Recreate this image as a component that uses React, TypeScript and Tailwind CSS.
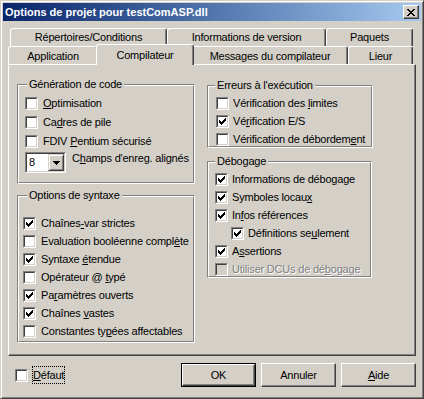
import type { ReactNode } from 'react';

function CheckMark() {
  return (
    <svg width="7" height="7" viewBox="0 0 7 7" shapeRendering="crispEdges">
      <path d="M0 2h1v3H0zM1 3h1v3H1zM2 4h1v3H2zM3 3h1v3H3zM4 2h1v3H4zM5 1h1v3H5zM6 0h1v3H6z" fill="#000" />
    </svg>
  );
}

function Box({ checked, disabled }: { checked?: boolean; disabled?: boolean }) {
  return (
    <div className="h-[13px] w-[13px] shrink-0 border border-t-[#808080] border-l-[#808080] border-r-white border-b-white">
      <div
        className={`flex h-full w-full items-center justify-center border border-t-[#404040] border-l-[#404040] border-r-[#d4d0c8] border-b-[#d4d0c8] ${
          disabled ? 'bg-[#d4d0c8]' : 'bg-white'
        }`}
      >
        {checked && <CheckMark />}
      </div>
    </div>
  );
}

function Option({
  children,
  checked,
  disabled,
  gap = 'ml-[5px]',
  className = '',
}: {
  children: ReactNode;
  checked?: boolean;
  disabled?: boolean;
  gap?: string;
  className?: string;
}) {
  return (
    <div className={`flex h-[13px] items-center ${className}`}>
      <Box checked={checked} disabled={disabled} />
      <span
        className={`${gap} whitespace-nowrap leading-[13px] ${
          disabled ? 'text-[#808080] [text-shadow:1px_1px_0_#fff]' : ''
        }`}
      >
        {children}
      </span>
    </div>
  );
}

function Group({
  title,
  titleLeft,
  className,
  children,
}: {
  title: string;
  titleLeft: string;
  className: string;
  children: ReactNode;
}) {
  return (
    <div className={`relative border border-t-[#808080] border-l-[#808080] border-r-white border-b-white ${className}`}>
      <div className="h-full w-full border border-t-white border-l-white border-r-[#808080] border-b-[#808080]">
        {children}
      </div>
      <span className={`absolute -top-[7px] ${titleLeft} whitespace-nowrap bg-[#d4d0c8] px-[2px] leading-[13px]`}>
        {title}
      </span>
    </div>
  );
}

function Tab({ label, className = '' }: { label: string; className?: string }) {
  return (
    <div
      className={`flex shrink-0 items-center justify-center rounded-t-[3px] border-t border-l border-r border-t-white border-l-white border-r-[#404040] bg-[#d4d0c8] shadow-[inset_-1px_0_0_#808080] ${className}`}
    >
      {label}
    </div>
  );
}

function Button({ children, isDefault }: { children: ReactNode; isDefault?: boolean }) {
  const face = (
    <div className="flex h-full w-full items-center justify-center border border-t-white border-l-white border-r-[#404040] border-b-[#404040] shadow-[inset_-1px_-1px_0_#808080]">
      {children}
    </div>
  );
  if (isDefault) {
    return <div className="h-[24px] w-[75px] border border-black">{face}</div>;
  }
  return <div className="h-[24px] w-[75px]">{face}</div>;
}

export default function App() {
  return (
    <div className="h-[399px] w-[424px] border border-t-[#d4d0c8] border-l-[#d4d0c8] border-r-[#404040] border-b-[#404040] bg-[#d4d0c8] p-[2px] font-['Liberation_Sans',Arial,sans-serif] text-[11px] tracking-[-0.2px] text-black shadow-[inset_1px_1px_0_#fff,inset_-1px_-1px_0_#808080]">
      {/* Title bar */}
      <div className="flex h-[18px] items-center justify-between bg-linear-to-r from-[#0a246a] to-[#a6caf0] pl-[2px]">
        <span className="font-bold leading-[13px] tracking-normal text-white">Options de projet pour testComASP.dll</span>
        <div className="mr-[2px] flex h-[14px] w-[16px] items-center justify-center border border-t-white border-l-white border-r-[#404040] border-b-[#404040] bg-[#d4d0c8] shadow-[inset_-1px_-1px_0_#808080]">
          <svg width="8" height="7" viewBox="0 0 8 7" shapeRendering="crispEdges">
            <path
              d="M0 0h2v1H0zM6 0h2v1H6zM1 1h2v1H1zM5 1h2v1H5zM2 2h4v1H2zM3 3h2v1H3zM2 4h4v1H2zM1 5h2v1H1zM5 5h2v1H5zM0 6h2v1H0zM6 6h2v1H6z"
              fill="#000"
            />
          </svg>
        </div>
      </div>

      {/* Tabs */}
      <div className="mt-[7px] ml-[7px] flex h-[18px]">
        <Tab label="Répertoires/Conditions" className="h-[18px] w-[157px]" />
        <Tab label="Informations de version" className="h-[18px] w-[159px]" />
        <Tab label="Paquets" className="h-[18px] w-[87px]" />
      </div>
      <div className="ml-[5px] flex h-[18px] items-end">
        <Tab label="Application" className="h-[18px] w-[90px] pt-[2px]" />
        <Tab label="Compilateur" className="relative z-10 -mb-[1px] -ml-[2px] h-[21px] w-[98px]" />
        <Tab label="Messages du compilateur" className="-ml-[2px] h-[18px] w-[156px] pt-[2px]" />
        <Tab label="Lieur" className="h-[18px] w-[65px] pt-[2px]" />
      </div>

      {/* Panel */}
      <div className="ml-[5px] flex h-[292px] w-[408px] items-start border border-t-white border-l-white border-r-[#404040] border-b-[#404040] shadow-[inset_-1px_-1px_0_#808080]">
        <div className="mt-[19px] ml-[8px] flex w-[178px] flex-col">
          <Group title="Génération de code" titleLeft="left-[9px]" className="h-[100px] w-[178px]">
            <div className="flex flex-col gap-[6px] pt-[11px] pl-[6px]">
              <Option>
                <u>O</u>ptimisation
              </Option>
              <Option>
                Ca<u>d</u>res de pile
              </Option>
              <Option>
                FDIV <u>P</u>entium sécurisé
              </Option>
              <div className="-mt-[2px] flex items-start">
                <div className="h-[21px] w-[41px] border border-t-[#808080] border-l-[#808080] border-r-white border-b-white">
                  <div className="flex h-full w-full items-center border border-t-[#404040] border-l-[#404040] border-r-[#d4d0c8] border-b-[#d4d0c8] bg-white">
                    <span className="flex-1 pl-[2px] leading-[13px]">8</span>
                    <div className="flex h-[17px] w-[16px] items-center justify-center border border-t-[#d4d0c8] border-l-[#d4d0c8] border-r-[#404040] border-b-[#404040] bg-[#d4d0c8] shadow-[inset_1px_1px_0_#fff,inset_-1px_-1px_0_#808080]">
                      <svg width="7" height="4" viewBox="0 0 7 4" shapeRendering="crispEdges">
                        <path d="M0 0h7v1H0zM1 1h5v1H1zM2 2h3v1H2zM3 3h1v1H3z" fill="#000" />
                      </svg>
                    </div>
                  </div>
                </div>
                <span className="ml-[6px] whitespace-nowrap leading-[13px]">
                  C<u>h</u>amps d'enreg. alignés
                </span>
              </div>
            </div>
          </Group>

          <Group title="Options de syntaxe" titleLeft="left-[9px]" className="mt-[11px] h-[148px] w-[178px]">
            <div className="flex flex-col gap-[5px] pt-[20px] pl-[4px]">
              <Option checked>
                Chaînes<u>-</u>var strictes
              </Option>
              <Option>
                Evaluation booléenne compl<u>è</u>te
              </Option>
              <Option checked>
                Syntaxe <u>é</u>tendue
              </Option>
              <Option>
                Opérateur @ <u>t</u>ypé
              </Option>
              <Option checked>
                Pa<u>r</u>amètres ouverts
              </Option>
              <Option checked>
                Chaînes <u>v</u>astes
              </Option>
              <Option>
                Constantes ty<u>p</u>ées affectables
              </Option>
            </div>
          </Group>
        </div>

        <div className="mt-[20px] ml-[12px] flex w-[166px] flex-col">
          <Group title="Erreurs à l'exécution" titleLeft="left-[7px]" className="h-[63px] w-[166px]">
            <div className="flex flex-col gap-[5px] pt-[10px] pl-[7px]">
              <Option gap="ml-[4px]">
                Vérification des <u>l</u>imites
              </Option>
              <Option checked gap="ml-[4px]">
                Vé<u>r</u>ification E/S
              </Option>
              <Option gap="ml-[4px]">
                Vérification de débordem<u>e</u>nt
              </Option>
            </div>
          </Group>

          <Group title="Débogage" titleLeft="left-[7px]" className="mt-[13px] h-[117px] w-[165px]">
            <div className="flex flex-col gap-[5px] pt-[10px] pl-[6px]">
              <Option checked gap="ml-[4px]">
                Informations de débo<u>g</u>age
              </Option>
              <Option checked gap="ml-[4px]">
                Symboles locau<u>x</u>
              </Option>
              <Option checked gap="ml-[4px]">
                In<u>f</u>os références
              </Option>
              <Option checked gap="ml-[4px]" className="ml-[16px]">
                Définitions se<u>u</u>lement
              </Option>
              <Option checked gap="ml-[4px]">
                A<u>s</u>sertions
              </Option>
              <Option disabled gap="ml-[4px]">
                Utiliser DCUs de dé<u>b</u>ogage
              </Option>
            </div>
          </Group>
        </div>
      </div>

      {/* Bottom row */}
      <div className="mt-[7px] flex h-[24px] items-center">
        <div className="ml-[12px] flex items-center">
          <Box />
          <span className="ml-[5px] leading-[16px] outline-1 outline-black outline-dotted">
            <u>D</u>éfaut
          </span>
        </div>
        <div className="mr-[5px] ml-auto flex gap-[5px]">
          <Button isDefault>OK</Button>
          <Button>Annuler</Button>
          <Button>
            <u>A</u>ide
          </Button>
        </div>
      </div>
    </div>
  );
}
